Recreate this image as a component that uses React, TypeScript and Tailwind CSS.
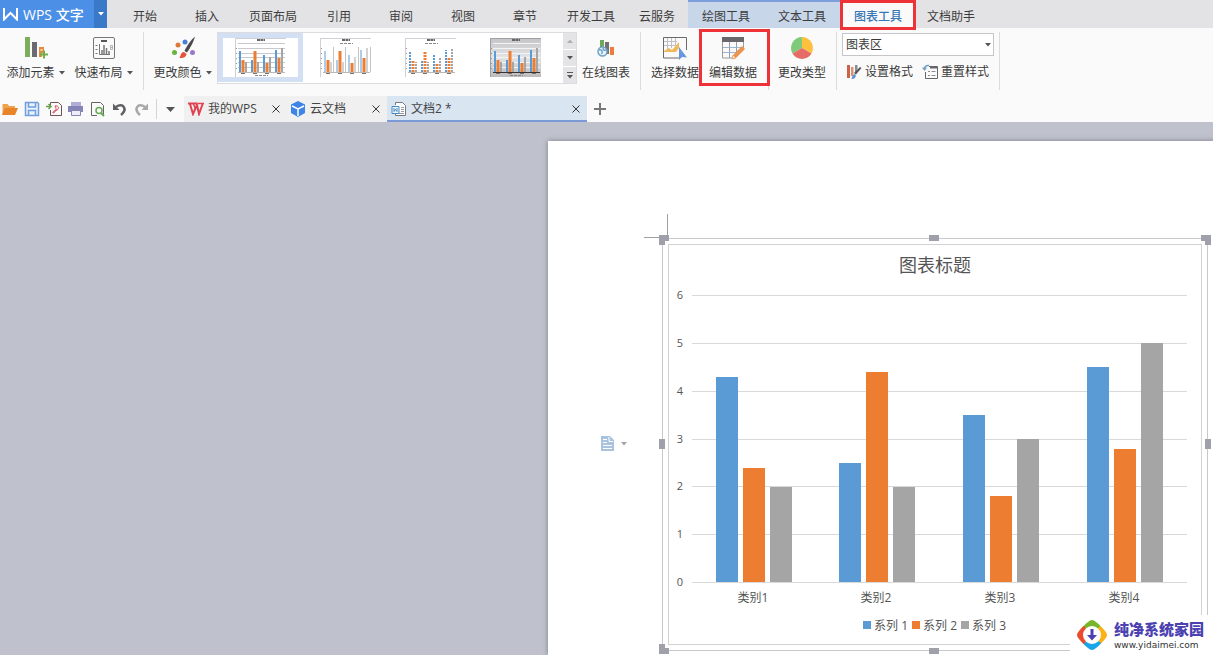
import type { ReactNode } from 'react'
import clsx from 'clsx'

const CATEGORIES = [
  { name: '类别1', values: [4.3, 2.4, 2] },
  { name: '类别2', values: [2.5, 4.4, 2] },
  { name: '类别3', values: [3.5, 1.8, 3] },
  { name: '类别4', values: [4.5, 2.8, 5] },
]

const COLORS = ['#5b9bd5', '#ed7d31', '#a5a5a5']

const MENU = [
  { label: '开始', width: 'w-[62px]' },
  { label: '插入', width: 'w-[62px]' },
  { label: '页面布局', width: 'w-[70px]' },
  { label: '引用', width: 'w-[62px]' },
  { label: '审阅', width: 'w-[62px]' },
  { label: '视图', width: 'w-[62px]' },
  { label: '章节', width: 'w-[62px]' },
  { label: '开发工具', width: 'w-[70px]' },
  { label: '云服务', width: 'w-[62px]' },
]

function Caret({ className = 'text-[#555]' }: { className?: string }) {
  return (
    <svg width="6" height="4" viewBox="0 0 6 4" className={clsx('shrink-0', className)}>
      <path d="M0 0h6L3 3.5z" fill="currentColor" />
    </svg>
  )
}

function Separator({ className }: { className?: string }) {
  return <div className={clsx('mt-1 h-[58px] w-px shrink-0 bg-[#dcdcde]', className)} />
}

interface ToolProps {
  label: string
  icon: ReactNode
  className?: string
  menu?: boolean
  highlight?: boolean
}

function Tool({ label, icon, className, menu, highlight }: ToolProps) {
  return (
    <button
      type="button"
      className={clsx('relative flex shrink-0 flex-col items-center gap-[5px] pt-2', className)}
    >
      <span className="flex h-6 items-center">{icon}</span>
      <span className="flex items-center gap-1 whitespace-nowrap text-[12px] leading-4">
        {label}
        {menu && <Caret />}
      </span>
      {highlight && (
        <span className="absolute top-px -right-[13px] -left-[10px] z-10 h-[57px] border-3 border-[#ee3338]" />
      )}
    </button>
  )
}

function AddElementIcon() {
  return (
    <svg width="24" height="24" viewBox="0 0 24 24">
      <path d="M1 1h5v20H1z" fill="#7fae5a" />
      <path d="M8 6h5v15H8z" fill="#6a6a70" />
      <path d="M15 11h5v5h-1v1h-1v4h-3z" fill="#e58a3c" />
      <path d="M16.500 13h2v2h-2z" fill="#f6d3ae" />
      <path d="M20 14.500v8M16 18.500h8" stroke="#6fae4a" strokeWidth="2" />
    </svg>
  )
}

function LayoutIcon() {
  return (
    <svg width="24" height="24" viewBox="0 0 24 24" fill="none" stroke="#777">
      <rect x="1.500" y="1.500" width="21" height="21" rx="1.500" />
      <path d="M9 5h6" stroke="#555" strokeWidth="2" />
      <path d="M7.500 8v10.500H18" />
      <path d="M3.500 9.500h2M3.500 13.500h2M3.500 17.500h2" />
      <path d="M10 14v4M12 9v9M14.500 12v6M17 15v3" strokeWidth="1.500" />
      <path d="M18.500 9.500h2v4h-2zM18.500 11.500h2" stroke="#b4b4b4" />
    </svg>
  )
}

function ColorsIcon() {
  return (
    <svg width="26" height="24" viewBox="0 0 26 24">
      <circle cx="8" cy="9" r="2.500" fill="#e07a3a" />
      <circle cx="15" cy="6" r="2.500" fill="#4a7fd8" />
      <circle cx="4.500" cy="16.500" r="2.500" fill="#6ab43e" />
      <circle cx="22.500" cy="16.500" r="2.500" fill="#9a78c8" />
      <path d="M25 .5c-3 2.500-8.500 9.500-10.500 14.500l2.500 1.500C20 12.500 24 5 25 .5z" fill="#4a4a4e" />
      <path d="M14 16c-3 0-3 3-4.500 6 4 .5 7-1.500 7-4z" fill="#e5533c" />
    </svg>
  )
}

function OnlineChartIcon() {
  return (
    <svg width="18" height="20" viewBox="0 0 18 20">
      <path d="M3 2h4v9H3z" fill="#6fa85a" />
      <path d="M8 4h4v12H8z" fill="#707076" />
      <path d="M13 9h4v8h-4z" fill="#ea7c3c" />
      <circle cx="5.500" cy="13.500" r="4.500" fill="#eaf3fa" stroke="#6fa3c8" strokeWidth="1.500" />
      <path d="M2 12c3-1 4 2 2.500 4M6 10c0 3 2 2 3.500 2" fill="none" stroke="#6fa3c8" strokeWidth="1.500" />
    </svg>
  )
}

function SelectDataIcon() {
  return (
    <svg width="24" height="24" viewBox="0 0 24 24">
      <path d="M17 22H.5V1.500h23V14" fill="none" stroke="#6a6a6e" />
      <path d="M4.500 2v12M8.500 2v10M12.500 2v8M1 5.500h13M1 9.500h12" stroke="#c0c0c8" />
      <path d="M1 15l5-3 3 2 7-8v6l-3 4H1z" fill="#efb95c" />
      <path d="M16 11v13l3-3 5 .5z" fill="#6898e0" />
    </svg>
  )
}

function EditDataIcon() {
  return (
    <svg width="24" height="24" viewBox="0 0 24 24">
      <path d="M1 1h22v5H1z" fill="#68686c" />
      <path d="M1.500 6v16H12M22.500 6v6M8.500 6v16M15.500 6v10" fill="none" stroke="#9b9ba0" />
      <path d="M2 11.500h20M2 16.500h13" stroke="#9ab7d2" />
      <path d="M11 23l1-4L21 10l3 3-9 9z" fill="#ea9450" />
      <path d="M11 23l1-4 3 3z" fill="#fbe5cf" stroke="#ea9450" strokeWidth=".7" />
    </svg>
  )
}

function PieIcon() {
  return (
    <svg width="22" height="22" viewBox="0 0 22 22">
      <path d="M11 11V0A11 11 0 0 0 1.500 16.500z" fill="#7fca7b" />
      <path d="M11 11V0a11 11 0 0 1 9.500 16.500z" fill="#fcc23f" />
      <path d="M11 11l-9.500 5.500a11 11 0 0 0 19 0z" fill="#e66c68" />
    </svg>
  )
}

function FormatIcon() {
  return (
    <svg width="16" height="16" viewBox="0 0 16 16">
      <path d="M1 1h3v13H1z" fill="#c9634a" />
      <path d="M5 3h2.500v9H5z" fill="#e09072" />
      <path d="M9 1h2.500v7H9z" fill="#8a8a92" />
      <path d="M15.500 4L10 10.500l-2-1.500 6-6z" fill="#55555c" />
      <path d="M9.500 10.500C8 9.500 6.500 11 5.500 15c3 0 5-2 4-4.500z" fill="#5b92d6" />
    </svg>
  )
}

function ResetIcon() {
  return (
    <svg width="16" height="16" viewBox="0 0 16 16" fill="none">
      <path d="M7 2.500h8.500v12h-12V8" stroke="#66666a" />
      <path d="M8 3.500h7" stroke="#66666a" strokeWidth="2" />
      <path d="M6 7.500h2M9.500 7.500h4M6 11.500h2M9.500 11.500h4" stroke="#8c8c92" />
      <path d="M7 1.500C4 1 2.500 2.500 2.500 5.500" stroke="#6f9fc4" strokeWidth="1.500" />
      <path d="M0 3.500h5L2.500 7z" fill="#6f9fc4" />
    </svg>
  )
}

const THUMB_BARS = [21, 12, 10, 12, 21, 10, 17, 9, 15, 22, 14, 24]
const THUMB_OFFSETS = [1, 4, 7]

function ChartThumb({ variant }: { variant: number }) {
  const dashed = variant === 2
  const dark = variant === 3
  return (
    <svg width="51" height="39" viewBox="0 0 51 39">
      {dark && (
        <>
          <defs>
            <linearGradient id="thumb-bg" x1="0" y1="0" x2="0" y2="1">
              <stop offset="0" stopColor="#c4c4c6" />
              <stop offset=".5" stopColor="#e4e4e6" />
              <stop offset="1" stopColor="#bcbcbe" />
            </linearGradient>
          </defs>
          <path d="M0 0h51v39H0z" fill="url(#thumb-bg)" />
        </>
      )}
      <path d="M.5 39V.5H51" fill="none" stroke={dark ? '#a0a0a4' : '#cfcfd4'} />
      <path d="M22 2h8" stroke="#666" strokeWidth="2" strokeDasharray="3 .5" />
      {(variant === 1 || dashed) && <path d="M20 5.500h13" stroke="#888" strokeDasharray="3 1" />}
      {variant === 1 ? (
        <path d="M13.500 9v25M25.500 9v25M38.500 9v25M50.500 9v25" stroke="#c4c4c4" />
      ) : (
        !dashed && (
          <path
            d="M3 5.500h47M3 10.500h47M3 15.500h47M3 19.500h47M3 24.500h47M3 29.500h47"
            stroke={dark ? '#f4f4f4' : '#c8c8ce'}
          />
        )
      )}
      <path d="M1 10.500h1M1 15.500h1M1 20.500h1M1 25.500h1M1 30.500h1" stroke="#999" />
      {THUMB_BARS.map((h, i) => {
        const j = i % 3
        const x = 4 + Math.floor(i / 3) * 12 + THUMB_OFFSETS[j]
        const thin = variant === 1 && j !== 1
        return (
          <path
            key={i}
            d={`M${x} 34v-${h}`}
            stroke={COLORS[j]}
            strokeWidth={thin ? 1 : j === 1 ? 3 : 2}
            strokeDasharray={dashed ? '2 1' : undefined}
          />
        )
      })}
      <path d="M3 34.500h47" stroke={dark ? '#333' : '#b8b8b8'} />
      <path d="M6 35.500h4M18 35.500h4M30 35.500h4M42 35.500h4" stroke="#8a6a55" />
      {(variant === 0 || dark) && <path d="M20 37.500h13" stroke="#888" strokeDasharray="3 1" />}
    </svg>
  )
}

function Gallery() {
  return (
    <div className="mt-1 flex h-[52px] w-[360px] shrink-0 border border-[#dcdce0] bg-white">
      {[0, 1, 2, 3].map((variant) => (
        <button
          key={variant}
          type="button"
          aria-label={`图表样式 ${variant + 1}`}
          className={clsx(
            'flex w-[85px] items-start justify-center p-[5px]',
            variant === 0 ? 'h-[49px] bg-[#d3dff3]' : 'h-full',
          )}
        >
          <span className={clsx('flex w-full justify-center', variant === 0 && 'bg-white')}>
            <ChartThumb variant={variant} />
          </span>
        </button>
      ))}
      <div className="ml-auto flex w-[13px] flex-col gap-px">
        <button type="button" aria-label="上一行" className="flex flex-1 items-center justify-center bg-[#e4e4e6]">
          <Caret className="rotate-180 text-[#b0b0b4]" />
        </button>
        <button type="button" aria-label="下一行" className="flex flex-1 items-center justify-center bg-[#e4e4e6]">
          <Caret />
        </button>
        <button
          type="button"
          aria-label="更多样式"
          className="flex flex-1 flex-col items-center justify-center gap-0.5 bg-[#e4e4e6]"
        >
          <span className="h-px w-1.5 bg-[#555]" />
          <Caret />
        </button>
      </div>
    </div>
  )
}

function MenuBar() {
  return (
    <nav className="flex h-7 shrink-0 bg-[#e3e3e6] text-[12px] text-[#3c3c3c]">
      <button
        type="button"
        className="flex w-[94px] shrink-0 items-center gap-[5px] bg-[#4c8fe6] pl-[3px] text-[14px] font-medium whitespace-nowrap text-white"
      >
        <svg width="15" height="13" viewBox="0 0 15 13" fill="none" stroke="#fff" strokeWidth="2">
          <path d="M1 0v11.500L7.500 5l6.500 6.500V0" />
        </svg>
        WPS 文字
      </button>
      <button
        type="button"
        aria-label="应用菜单"
        className="mr-[7px] flex w-[13px] shrink-0 items-center justify-center bg-[#3a78c8]"
      >
        <Caret className="text-white" />
      </button>
      {MENU.map((item) => (
        <button key={item.label} type="button" className={clsx('shrink-0 pt-1.5', item.width)}>
          {item.label}
        </button>
      ))}
      <button type="button" className="w-[76px] shrink-0 border-t-2 border-[#7c9fdb] bg-[#c8d6e9] pt-1">
        绘图工具
      </button>
      <button type="button" className="w-[76px] shrink-0 border-t-2 border-[#7c9fdb] bg-[#c8d6e9] pt-1">
        文本工具
      </button>
      <button
        type="button"
        className="z-10 h-[30px] w-[76px] shrink-0 border-3 border-[#ee3338] bg-[#fafafa] pt-1 font-medium text-[#3677b4]"
      >
        图表工具
      </button>
      <button type="button" className="w-[70px] shrink-0 pt-1.5">
        文档助手
      </button>
    </nav>
  )
}

function Ribbon() {
  return (
    <section className="flex h-[68px] shrink-0 items-start bg-[#fafafa] text-[#3a3a3a]">
      <Tool label="添加元素" icon={<AddElementIcon />} menu className="w-[71px]" />
      <Tool label="快速布局" icon={<LayoutIcon />} menu className="w-[65px]" />
      <Separator className="ml-[7px]" />
      <Tool label="更改颜色" icon={<ColorsIcon />} menu className="ml-1 w-[69px]" />
      <Gallery />
      <Tool label="在线图表" icon={<OnlineChartIcon />} className="w-[58px]" />
      <Separator className="ml-[5px]" />
      <Tool label="选择数据" icon={<SelectDataIcon />} className="w-[68px]" />
      <Tool label="编辑数据" icon={<EditDataIcon />} className="w-12" highlight />
      <Separator className="ml-[11px]" />
      <Tool label="更改类型" icon={<PieIcon />} className="w-[66px]" />
      <Separator className="ml-px" />
      <div className="ml-[5px] flex w-[152px] shrink-0 flex-col gap-2 pt-[5px]">
        <div className="relative">
          <select
            aria-label="图表元素"
            className="block h-[23px] w-full appearance-none border border-[#c6c6ca] bg-white pl-[3px] text-[12px] leading-4"
          >
            <option>图表区</option>
          </select>
          <span className="pointer-events-none absolute inset-y-0 right-[3px] flex items-center">
            <Caret />
          </span>
        </div>
        <div className="flex justify-between pr-[5px] pl-1 text-[12px] leading-4 whitespace-nowrap">
          <button type="button" className="flex items-center gap-[3px]">
            <FormatIcon />
            设置格式
          </button>
          <button type="button" className="flex items-center gap-[3px]">
            <ResetIcon />
            重置样式
          </button>
        </div>
      </div>
      <Separator className="ml-[5px]" />
    </section>
  )
}

function QuickButton({ label, children }: { label: string; children: ReactNode }) {
  return (
    <button type="button" aria-label={label} className="shrink-0">
      <svg width="16" height="16" viewBox="0 0 16 16" fill="none">
        {children}
      </svg>
    </button>
  )
}

function CloseIcon() {
  return (
    <svg width="8" height="8" viewBox="0 0 8 8" stroke="#333" fill="none">
      <path d="M.5.500l7 7M7.500.500l-7 7" />
    </svg>
  )
}

interface DocTabProps {
  label: string
  icon: ReactNode
  className: string
}

function DocTab({ label, icon, className }: DocTabProps) {
  return (
    <div className={clsx('flex h-full shrink-0 items-center pl-1 text-[12px]', className)}>
      <button type="button" className="flex items-center gap-1 whitespace-nowrap text-[#444]">
        {icon}
        {label}
      </button>
      <button type="button" aria-label={`关闭 ${label}`} className="ml-auto">
        <CloseIcon />
      </button>
    </div>
  )
}

function TabBar() {
  return (
    <div className="flex h-[26px] shrink-0 items-center bg-[#fafafa]">
      <div className="flex shrink-0 gap-1.5 pr-1.5 pl-0.5">
        <QuickButton label="打开">
          <path d="M.5 14V3h5l1.500 2h6v2" fill="#f0a24a" />
          <path d="M0 14l3-7h13l-3 7z" fill="#e8842a" />
        </QuickButton>
        <QuickButton label="保存">
          <path d="M1.500 1.500h12l1 1v12h-13z" fill="#e8f1fc" stroke="#6f9edb" strokeWidth="1.500" />
          <path d="M4.500 2v4h7V2M4.500 14v-4.500h7V14" stroke="#6f9edb" strokeWidth="1.500" />
        </QuickButton>
        <QuickButton label="输出为PDF">
          <path d="M4.500 4V1.500h8l3 3v10h-11V9" stroke="#6d5555" />
          <path d="M0 5.500h5M2.500 3L5 5.500 2.500 8" stroke="#65a24a" strokeWidth="1.500" />
          <path d="M7 12c3-1 4-4 2-7 4-1 5 4 .5 4.500-2 0-3 2-2.500 2.500z" stroke="#cf4a55" />
        </QuickButton>
        <QuickButton label="打印">
          <path d="M3 1h10v4H3z" fill="#aeaed6" />
          <path d="M0 5h15v6H0z" fill="#8484b6" />
          <path d="M3.500 9.500h9v5h-9z" fill="#eeeef8" stroke="#8484b6" />
        </QuickButton>
        <QuickButton label="打印预览">
          <path d="M7 14.500H1.500v-13h9l3 3V14" stroke="#666" />
          <circle cx="9" cy="9.500" r="3" stroke="#67a857" strokeWidth="1.500" />
          <path d="M11 12l3 3" stroke="#67a857" strokeWidth="2" />
        </QuickButton>
        <QuickButton label="撤销">
          <path d="M4 6c7-5 12 2 5 8" stroke="#606064" strokeWidth="2.500" />
          <path d="M1 2.500v6.500h6.500z" fill="#606064" />
        </QuickButton>
        <QuickButton label="恢复">
          <path d="M11 6C4 1-1 8 6 14" stroke="#a8a8aa" strokeWidth="2.500" />
          <path d="M14 2.500v6.500H7.500z" fill="#a8a8aa" />
        </QuickButton>
      </div>
      <div className="h-5 w-px shrink-0 bg-[#d4d4d6]" />
      <button type="button" aria-label="自定义工具栏" className="flex w-[27px] shrink-0 justify-center">
        <svg width="9" height="5" viewBox="0 0 9 5">
          <path d="M0 0h9L4.500 5z" fill="#555" />
        </svg>
      </button>
      <DocTab
        label="我的WPS"
        className="w-[102px] bg-[#f0f0f0] pr-1.5"
        icon={
          <svg width="16" height="14" viewBox="0 0 16 14" fill="none" stroke="#e0434f" strokeWidth="2">
            <path d="M0 1.500h9M2 2l3 10 4-9 2 9 4-11" />
            <path d="M5.500 2l2 5M10 1.500h6" strokeWidth="1.500" />
          </svg>
        }
      />
      <DocTab
        label="云文档"
        className="w-[101px] bg-[#f0f0f0] pr-[7px]"
        icon={
          <svg width="16" height="16" viewBox="0 0 16 16">
            <path d="M8 0l7 3.500v8.500L8 16l-7-4V3.500z" fill="#3d84e6" />
            <path d="M2 5l6 3 6-3M8 8v7" stroke="#fff" strokeWidth="1.500" fill="none" />
          </svg>
        }
      />
      <DocTab
        label="文档2 *"
        className="w-[200px] bg-[#dae5f2] pr-[7px] shadow-[inset_0_-2px_0_#7c9ad6]"
        icon={
          <svg width="16" height="16" viewBox="0 0 16 16" fill="none">
            <path d="M4.500 4V1.500h7l3 3v10h-10V12" fill="#fff" stroke="#77777c" />
            <path d="M10 6.500h3M10 8.500h3M10 10.500h3M6 12.500h7" stroke="#9a9aa0" />
            <path d="M1 5.500h7v7H1z" fill="#eef5fb" stroke="#4689c4" />
            <path d="M3 7v3.500l1.500-2 1.500 2V7" stroke="#4689c4" />
          </svg>
        }
      />
      <button type="button" aria-label="新建标签" className="ml-[7px]">
        <svg width="12" height="12" viewBox="0 0 12 12" stroke="#777" strokeWidth="2">
          <path d="M6 0v12M0 6h12" />
        </svg>
      </button>
    </div>
  )
}

function BarChart() {
  const base = 337
  const step = 287 / 6
  return (
    <svg width="532" height="399" viewBox="0 0 532 399" className="block" fill="#555">
      <text x="266" y="27" textAnchor="middle" fontSize="18">
        图表标题
      </text>
      {[0, 1, 2, 3, 4, 5, 6].map((n) => {
        const y = Math.round(base - n * step)
        return (
          <g key={n}>
            <text x="11" y={y + 4} textAnchor="middle" fontSize="11">
              {n}
            </text>
            <path d={`M23 ${y + 0.5}h495`} stroke="#d9d9d9" />
          </g>
        )
      })}
      {CATEGORIES.map((category, i) => {
        const left = Math.floor(47 + i * 123.7)
        return (
          <g key={category.name}>
            {category.values.map((value, j) => {
              const h = Math.floor(value * step)
              return (
                <rect key={j} x={left + Math.floor(j * 27.3)} y={base - h} width="22" height={h} fill={COLORS[j]} />
              )
            })}
            <text x={left + 37} y="357" textAnchor="middle" fontSize="12">
              {category.name}
            </text>
          </g>
        )
      })}
      {COLORS.map((color, i) => (
        <g key={color}>
          <rect x={194 + i * 49} y="376" width="8" height="8" fill={color} />
          <text x={205 + i * 49} y="385" fontSize="12">
            系列 {i + 1}
          </text>
        </g>
      ))}
    </svg>
  )
}

const HANDLES = [
  '-left-1 top-[200px] h-2.5 w-1.5',
  '-right-1 top-[200px] h-2.5 w-1.5',
  'left-[266px] -top-1 h-1.5 w-2.5',
  'left-[266px] -bottom-1 h-1.5 w-2.5',
]

const CORNERS = [
  '-left-1 -top-1',
  '-right-1 -top-1 rotate-90',
  '-right-1 -bottom-1 rotate-180',
  '-left-1 -bottom-1 -rotate-90',
]

function ChartFrame() {
  return (
    <div className="relative w-[546px] border border-[#c9c9cd] p-[5px]">
      <div className="border border-[#d2d2d5]">
        <BarChart />
      </div>
      {HANDLES.map((pos) => (
        <span key={pos} className={clsx('absolute bg-[#a0a0aa]', pos)} />
      ))}
      {CORNERS.map((pos) => (
        <svg key={pos} width="10" height="10" viewBox="0 0 10 10" className={clsx('absolute', pos)}>
          <path d="M0 0h10v6H6v4H0z" fill="#a0a0aa" />
        </svg>
      ))}
      {/* page margin marks */}
      <span className="absolute -top-[25px] left-1 h-[21px] w-px bg-[#a0a0a4]" />
      <span className="absolute -top-0.5 -left-[19px] h-px w-4 bg-[#a0a0a4]" />
      <button
        type="button"
        aria-label="布局选项"
        className="absolute top-[197px] -left-[62px] flex items-center gap-1.5"
      >
        <svg width="14" height="15" viewBox="0 0 14 15" fill="none">
          <path d="M0 0h9l4 4v11H0z" fill="#a9c3de" />
          <path d="M2 3.500h4M2 6.500h4M2 9.500h9M2 12.500h9M8 1v4.500h4" stroke="#fff" />
        </svg>
        <Caret className="text-[#a8a0a8]" />
      </button>
    </div>
  )
}

function Watermark() {
  return (
    <div className="absolute right-0 bottom-0 flex h-10 w-[143px] items-center gap-1.5 bg-white pl-1.5">
      <svg width="32" height="32" viewBox="0 0 32 32" className="shrink-0">
        <path d="M7 8q0-1 5-5 4-4 8 0 5 4 5 5l-4 3H11z" fill="#78b52c" />
        <path d="M24 7q1 0 5 5 4 4 0 8-4 5-5 5l-3-4V11z" fill="#fbb216" />
        <path d="M25 24q0 1-5 5-4 4-8 0-5-4-5-5l4-3h10z" fill="#18a5ea" />
        <path d="M8 25q-1 0-5-5-4-4 0-8 4-5 5-5l3 4v10z" fill="#ea4b2c" />
        <circle cx="16" cy="16" r="9" fill="#fff" />
        <path d="M14.500 10h3v6h3.500l-5 5.500-5-5.500h3.500z" fill="#4c41b0" />
      </svg>
      <div className="whitespace-nowrap">
        <p className="text-[15px] leading-4 font-black text-[#4c41b0]">纯净系统家园</p>
        <p className="pt-1 font-['DejaVu_Sans',sans-serif] text-[9px] leading-2 text-[#333]">www.yidaimei.com</p>
      </div>
    </div>
  )
}

export default function App() {
  return (
    <div className="flex h-screen flex-col overflow-hidden font-['Open_Sans','Noto_Sans_CJK_SC',sans-serif]">
      <MenuBar />
      <Ribbon />
      <TabBar />
      <main className="relative flex min-h-0 flex-1 overflow-hidden bg-[#bfc2cc] pt-[19px] pl-[548px]">
        <div className="w-[800px] shrink-0 bg-white pt-[97px] pl-[114px] shadow-[0_0_5px_rgba(80,80,90,0.6)]">
          <ChartFrame />
        </div>
        <Watermark />
      </main>
    </div>
  )
}
